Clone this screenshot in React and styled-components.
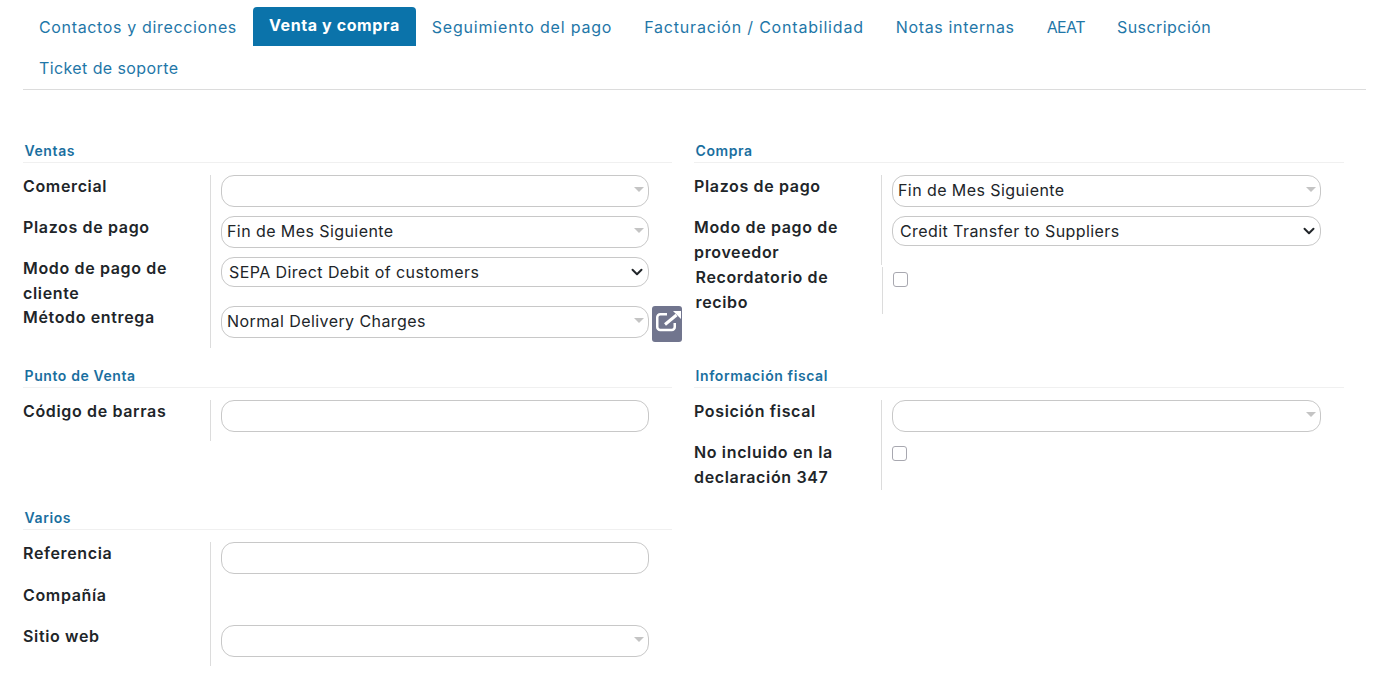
import React from "react";
import styled, { createGlobalStyle } from "styled-components";

const GlobalStyle = createGlobalStyle`
  html, body {
    margin: 0;
    background: #fff;
    font-family: "Inter", "Noto Sans", sans-serif;
  }
`;

// tracking per tab, Inter runs a little off the original font otherwise
const tabs = [
  { name: "Contactos y direcciones", tracking: 0.65 },
  { name: "Venta y compra", tracking: 0.6, active: true },
  { name: "Seguimiento del pago", tracking: 0.8 },
  { name: "Facturación / Contabilidad", tracking: 0.8 },
  { name: "Notas internas", tracking: 0.65 },
  { name: "AEAT", tracking: -0.6 },
  { name: "Suscripción", tracking: 0.45 },
  { name: "Ticket de soporte", tracking: 0.4 },
];

const ExternalIcon = () => (
  <svg width="25" height="21" viewBox="0 0 25 21" fill="none" stroke="#fff" strokeWidth="2.5">
    <path d="M18.75 12v4a3 3 0 0 1-3 3H4.25a3 3 0 0 1-3-3V6.25a3 3 0 0 1 3-3H11" />
    <path d="M9 13.5 20.5 4" strokeWidth="3" />
    <path d="M17 0H25V8Z" fill="#fff" stroke="none" />
  </svg>
);

const Chevron = () => (
  <svg width="12" height="12" viewBox="0 0 16 16" fill="none" stroke="#212529" strokeWidth="2.6" strokeLinecap="round" strokeLinejoin="round">
    <path d="m2 5 6 6 6-6" />
  </svg>
);

const Combo = ({ value = "" }) => (
  <ComboWrap>
    <TextBox readOnly value={value} />
    <Caret />
  </ComboWrap>
);

const Dropdown = ({ value }) => (
  <ComboWrap>
    <SelectBox>
      <span>{value}</span>
      <Chevron />
    </SelectBox>
  </ComboWrap>
);

const App = () => (
  <Page>
    <GlobalStyle />
    <TabBar>
      {tabs.map((tab) => (
        <Tab key={tab.name} $active={tab.active} $tracking={tab.tracking}>{tab.name}</Tab>
      ))}
    </TabBar>

    <Groups>
      <Group>
        <GroupTitle>Ventas</GroupTitle>
        <Table>
          <Label>Comercial</Label>
          <Cell><Combo /></Cell>
          <Label>Plazos de pago</Label>
          <Cell><Combo value="Fin de Mes Siguiente" /></Cell>
          <Label>Modo de pago de cliente</Label>
          <Cell $gap="19px"><Dropdown value="SEPA Direct Debit of customers" /></Cell>
          <Label>Método entrega</Label>
          <Cell $gap="6px">
            <Combo value="Normal Delivery Charges" />
            <OpenButton aria-label="Abrir"><ExternalIcon /></OpenButton>
          </Cell>
        </Table>
      </Group>

      <Group>
        <GroupTitle>Compra</GroupTitle>
        <Table>
          <Label>Plazos de pago</Label>
          <Cell><Combo value="Fin de Mes Siguiente" /></Cell>
          <Label>Modo de pago de proveedor</Label>
          <Cell $gap="18px"><Dropdown value="Credit Transfer to Suppliers" /></Cell>
          <Label $shift>Recordatorio de recibo</Label>
          <Cell $shift><Check type="checkbox" /></Cell>
        </Table>
      </Group>

      <Group>
        <GroupTitle>Punto de Venta</GroupTitle>
        <Table>
          <Label>Código de barras</Label>
          <Cell><TextBox readOnly value="" /></Cell>
        </Table>
      </Group>

      <Group>
        <GroupTitle>Información fiscal</GroupTitle>
        <Table>
          <Label>Posición fiscal</Label>
          <Cell><Combo /></Cell>
          <Label>No incluido en la declaración 347</Label>
          <Cell><Check type="checkbox" /></Cell>
        </Table>
      </Group>

      <Group>
        <GroupTitle>Varios</GroupTitle>
        <Table>
          <Label>Referencia</Label>
          <Cell><TextBox readOnly value="" /></Cell>
          <Label $flat>Compañía</Label>
          <Cell $empty />
          <Label>Sitio web</Label>
          <Cell><Combo /></Cell>
        </Table>
      </Group>
    </Groups>
  </Page>
);

const Page = styled.div`
  padding: 7px 12px 0 23px;
  color: #212529;
`;

const TabBar = styled.div`
  display: flex;
  flex-wrap: wrap;
  border-bottom: 1px solid #dcdcdc;
`;

const Tab = styled.div`
  box-sizing: border-box;
  height: 39px;
  margin-bottom: 2px;
  padding: 0 16px ${(p) => (p.$active ? "3px" : "0")};
  display: flex;
  align-items: center;
  font-size: 16px;
  letter-spacing: ${(p) => p.$tracking}px;
  color: ${(p) => (p.$active ? "#fff" : "#1f77a8")};
  background: ${(p) => (p.$active ? "#0b73aa" : "transparent")};
  font-weight: ${(p) => (p.$active ? 700 : 400)};
  border-radius: 4px 4px 0 0;
`;

const Groups = styled.div`
  display: grid;
  grid-template-columns: 649px 650px;
  column-gap: 22px;
  row-gap: 18px;
  padding-top: 51px;
  align-items: start;
`;

const Group = styled.section``;

const GroupTitle = styled.h3`
  margin: 0 0 12px;
  padding-left: 1.5px;
  height: 21px;
  line-height: 20px;
  font-size: 14px;
  font-weight: 600;
  letter-spacing: 0.6px;
  color: #1a6f9f;
  border-bottom: 1px solid #f0f0f0;
`;

const Table = styled.div`
  display: grid;
  grid-template-columns: 187px 1fr;
`;

const Label = styled.div`
  width: 170px;
  font-size: 16px;
  font-weight: 600;
  line-height: 24.5px;
  letter-spacing: 0.65px;
  color: #212529;
  margin-left: ${(p) => (p.$shift ? "1.5px" : "0")};
  margin-top: ${(p) => (p.$shift || p.$flat ? "0" : "-1px")};
  padding-bottom: ${(p) => (p.$shift || p.$flat ? "0" : "1px")};
`;

const Cell = styled.div`
  display: flex;
  align-items: flex-start;
  box-sizing: border-box;
  border-left: 1px solid #dcdcdc;
  padding: 0 23px ${(p) => p.$gap || "9px"} 10px;
  min-height: ${(p) => (p.$empty ? "42px" : "0")};
  margin-left: ${(p) => (p.$shift ? "1px" : "0")};
  margin-top: ${(p) => (p.$shift ? "2px" : "0")};
`;

const ComboWrap = styled.div`
  position: relative;
  flex: 0 0 100%;
`;

const TextBox = styled.input`
  display: block;
  width: 100%;
  height: 32px;
  box-sizing: border-box;
  border: 1px solid #c8c8c8;
  border-radius: 13px;
  padding: 0 24px 2px 5px;
  outline: none;
  font: 400 16px "Inter", sans-serif;
  letter-spacing: 0.42px;
  color: #212529;
  background: #fff;
`;

const Caret = styled.span`
  position: absolute;
  right: 5px;
  top: 12px;
  border-left: 5px solid transparent;
  border-right: 5px solid transparent;
  border-top: 5px solid #c4c4c4;
`;

const SelectBox = styled.div`
  display: flex;
  align-items: center;
  justify-content: space-between;
  width: 100%;
  height: 30px;
  box-sizing: border-box;
  border: 1px solid #c8c8c8;
  border-radius: 13px;
  padding: 0 5px 1px 7px;
  font-size: 16px;
  letter-spacing: 0.42px;
`;

const OpenButton = styled.button`
  flex: none;
  display: flex;
  align-items: flex-start;
  width: 30px;
  height: 36px;
  margin-left: 3px;
  padding: 5px 0 0 4px;
  border: none;
  border-radius: 3px;
  background: #71758e;
`;

const Check = styled.input`
  appearance: none;
  width: 15px;
  height: 15px;
  margin: 5px 0 0 0;
  border: 1px solid #a8a8b0;
  border-radius: 3px;
  background: #fff;
`;

export default App;
